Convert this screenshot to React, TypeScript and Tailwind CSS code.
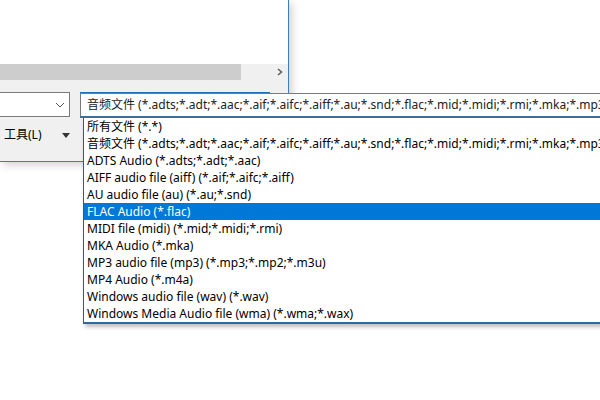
import React from "react";

const fileTypes = [
  "所有文件 (*.*)",
  "音频文件 (*.adts;*.adt;*.aac;*.aif;*.aifc;*.aiff;*.au;*.snd;*.flac;*.mid;*.midi;*.rmi;*.mka;*.mp3;*.m4a;*.wav;*.wma;*.wax)",
  "ADTS Audio (*.adts;*.adt;*.aac)",
  "AIFF audio file (aiff) (*.aif;*.aifc;*.aiff)",
  "AU audio file (au) (*.au;*.snd)",
  "FLAC Audio (*.flac)",
  "MIDI file (midi) (*.mid;*.midi;*.rmi)",
  "MKA Audio (*.mka)",
  "MP3 audio file (mp3) (*.mp3;*.mp2;*.m3u)",
  "MP4 Audio (*.m4a)",
  "Windows audio file (wav) (*.wav)",
  "Windows Media Audio file (wma) (*.wma;*.wax)",
];

const selected = 5;

const App: React.FC = () => {
  return (
    <div
      className="relative w-[600px] h-[400px] overflow-hidden bg-white text-[12px] text-black"
      style={{ fontFamily: '"Noto Sans", "Noto Sans CJK SC", sans-serif' }}
    >
      {/* dialog window, partly off-screen */}
      <div className="w-[289px] border-r border-b border-[#3d7cc0] shadow-[3px_3px_8px_rgba(0,0,0,0.18)]">
        <div className="h-[64px] bg-white" />

        {/* horizontal scrollbar */}
        <div className="flex h-[16px] items-center bg-[#f0f0f0]">
          <div className="h-full w-[241px] bg-[#cdcdcd]" />
          <div className="flex-1" />
          <svg width="8" height="8" viewBox="0 0 8 8" className="mr-[4px]">
            <path d="M2 1 L5.5 4 L2 7" fill="none" stroke="#606060" strokeWidth="1.6" />
          </svg>
        </div>

        <div className="h-[81px] bg-[#f0f0f0] pt-[12px]">
          <div className="flex items-start gap-[10px]">
            <div className="flex h-[25px] w-[70px] items-center justify-end border border-l-0 border-[#7a7a7a] bg-white pr-[4px]">
              <svg width="10" height="6" viewBox="0 0 10 6">
                <path d="M1 1 L5 5 L9 1" fill="none" stroke="#555" strokeWidth="1" />
              </svg>
            </div>
            <div className="h-[25px] w-[190px] border border-[#1f6fb8] bg-white" />
          </div>
          <div className="mt-[9px] flex h-[18px] items-center">
            <span className="ml-[4px]">工具(L)</span>
            <svg width="8" height="5" viewBox="0 0 8 5" className="ml-[20px]">
              <path d="M0 0 H8 L4 5 Z" fill="#333" />
            </svg>
          </div>
        </div>
      </div>

      {/* open dropdown of the file type combo */}
      <div className="absolute left-[80px] top-[93px] w-[560px]">
        <div className="flex h-[23px] items-center overflow-hidden whitespace-nowrap border-l border-t border-[#7a7a7a] bg-white pl-[6px] text-[#222]">
          {fileTypes[1]}
        </div>
        <div className="h-[2px] bg-[#3b6f9e]" />
        <div className="ml-[3px] border-l border-b-2 border-l-[#4a5560] border-b-[#2f6a9c] bg-white shadow-[2px_3px_4px_rgba(0,0,0,0.25)]">
          {fileTypes.map((t, i) => (
            <div
              key={t}
              className={
                i === selected
                  ? "flex h-[17px] items-center whitespace-nowrap bg-[#0078d7] pl-[3px] text-white"
                  : "flex h-[17px] items-center whitespace-nowrap pl-[3px]"
              }
            >
              {t}
            </div>
          ))}
        </div>
      </div>
    </div>
  );
};

export default App;
